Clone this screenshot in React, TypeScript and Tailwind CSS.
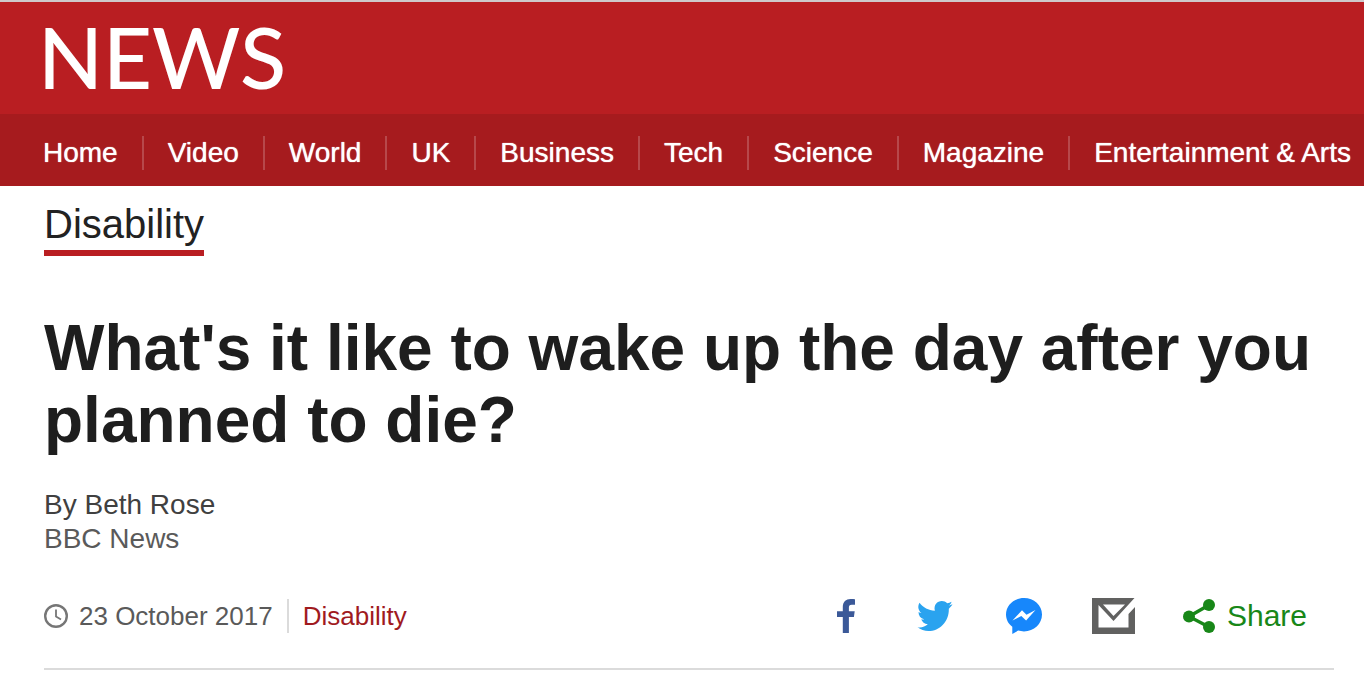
import React from 'react';

const sections = ['Home', 'Video', 'World', 'UK', 'Business', 'Tech', 'Science', 'Magazine', 'Entertainment & Arts'];

const ClockIcon = () => (
  <svg viewBox="0 0 24 24" className="w-6 h-6 flex-shrink-0" fill="none" stroke="#767676" aria-hidden="true">
    <circle cx="12" cy="12" r="10.8" strokeWidth="2.4" />
    <path d="M12 5.5v7l5 3" strokeWidth="1.8" />
  </svg>
);

const FacebookIcon = () => (
  <svg viewBox="0 0 18 34" className="w-[18px] h-[34px]" aria-hidden="true">
    <path fill="#3b5998" d="M18 .2V5.8h-3.200c-2.400 0-2.900 1.100-2.900 2.800v3.700h5.800l-.8 5.800h-5V34H5.800V18.100H0v-5.800h5.800V8C5.800 2.900 9 0 13.500 0 15.700 0 17.400.1 18 .2Z" />
  </svg>
);

const TwitterIcon = () => (
  <svg viewBox="0 0 105 90" className="w-9 h-[30px]" aria-hidden="true">
    <path
      fill="#2aa3ef"
      d="M0 79C12 81 23 77 31 70 21 69 14 63 11 55 14 56 17 56 20 55 9 52 3 44 3 33 6 35 9 36 12 36 3 29-1 17 6 5 17 19 33 28 52 29 48 12 59 0 73 0 79 0 85 2 89 7 94 6 98 4 102 2 101 7 98 11 93 14 97 13 101 12 105 10 102 15 99 19 94 23 95 62 66 90 33 90 21 90 9 86 0 79Z"
    />
  </svg>
);

const MessengerIcon = () => (
  <svg viewBox="0 0 36 36" className="w-9 h-9" aria-hidden="true">
    <path fill="#1787fb" d="M18 0C8 0 0 7.200 0 16.500c0 5 2.400 9.300 6.300 12.200V36l5.800-3.400c1.900.5 3.800.8 5.900.8 10 0 18-7.500 18-16.900S28 0 18 0Z" />
    <path fill="#fff" d="M6.500 22.500 16 12.200 20.500 16.700 29.500 12 20.100 22.500 15.300 17.900Z" />
  </svg>
);

const MailIcon = () => (
  <svg viewBox="0 0 43 36" className="w-[43px] h-9" aria-hidden="true">
    <path fill="#616160" d="M0 0h43v36H0Z" />
    <path fill="#fff" d="M43 0v9l-6.500 7v13.500H6.500V7L21.500 23 42.500 0Z" />
    <path fill="#fff" d="M11 6.500h22L21.500 18Z" />
  </svg>
);

const ShareIcon = () => (
  <svg viewBox="0 0 32 34" className="w-8 h-[34px]" fill="#188718" stroke="#188718" aria-hidden="true">
    <path d="M26 6 6 17.500 26 28" fill="none" strokeWidth="3.400" />
    <g stroke="none">
      <circle cx="26" cy="6" r="6" />
      <circle cx="6" cy="17.500" r="6" />
      <circle cx="26" cy="28" r="6" />
    </g>
  </svg>
);

const networks = [
  { name: 'Facebook', icon: <FacebookIcon /> },
  { name: 'Twitter', icon: <TwitterIcon /> },
  { name: 'Messenger', icon: <MessengerIcon /> },
  { name: 'Email', icon: <MailIcon /> },
];

const App: React.FC = () => {
  return (
    <div className="min-h-screen overflow-x-hidden bg-white font-['Liberation_Sans',Arial,sans-serif] text-[#1e1e1e]">
      <header className="border-t-2 border-[#cfc9cb] bg-[#b91e22] text-white">
        <div className="flex h-28 items-center px-[38px] pb-1">
          <a href="#" className="font-['Lato',sans-serif] text-[85px] font-medium leading-none">
            NEWS
          </a>
        </div>
        <nav aria-label="News sections" className="bg-[#a61b1e] pt-[22px] pb-4 pl-[19px]">
          <ul className="flex">
            {sections.map((section) => (
              <li key={section} className="border-r-2 border-[#b7484b] last:border-r-0">
                <a
                  href="#"
                  className="block whitespace-nowrap px-6 text-[28px] leading-7 py-[3px] [text-shadow:0_0_1px_#fff]"
                >
                  {section}
                </a>
              </li>
            ))}
          </ul>
        </nav>
      </header>

      <main className="pl-11 pr-[30px]">
        <div className="flex pt-4">
          <a href="#" className="border-b-[6px] border-[#b91e22] pb-1 text-[40px] leading-[44px] text-[#222]">
            Disability
          </a>
        </div>

        <h1 className="mt-14 text-[64px] font-bold leading-[72px]">
          What's it like to wake up the day after you planned to die?
        </h1>

        <div className="mt-8 text-[28px] leading-[34px]">
          <p className="text-[#404040]">By Beth Rose</p>
          <p className="text-[#5a5a5a]">BBC News</p>
        </div>

        <div className="mt-[42px] flex items-center justify-between border-b-2 border-[#dbdbdb] pb-[34px]">
          <div className="flex items-center text-[26px] leading-[34px]">
            <ClockIcon />
            <time dateTime="2017-10-23" className="ml-[11px] text-[#5a5a5a]">
              23 October 2017
            </time>
            <a href="#" className="ml-3.5 border-l-2 border-[#dbdbdb] pl-3.5 text-[#a01a1e]">
              Disability
            </a>
          </div>
          <div className="flex items-center pr-[27px]">
            <ul className="flex items-center">
              {networks.map((network) => (
                <li key={network.name} className="flex w-[89px] justify-center">
                  <a href="#" aria-label={network.name}>
                    {network.icon}
                  </a>
                </li>
              ))}
            </ul>
            <button type="button" className="ml-[25px] flex items-center gap-3 text-[30px] leading-[34px] text-[#188718]">
              <ShareIcon />
              Share
            </button>
          </div>
        </div>
      </main>
    </div>
  );
};

export default App;
